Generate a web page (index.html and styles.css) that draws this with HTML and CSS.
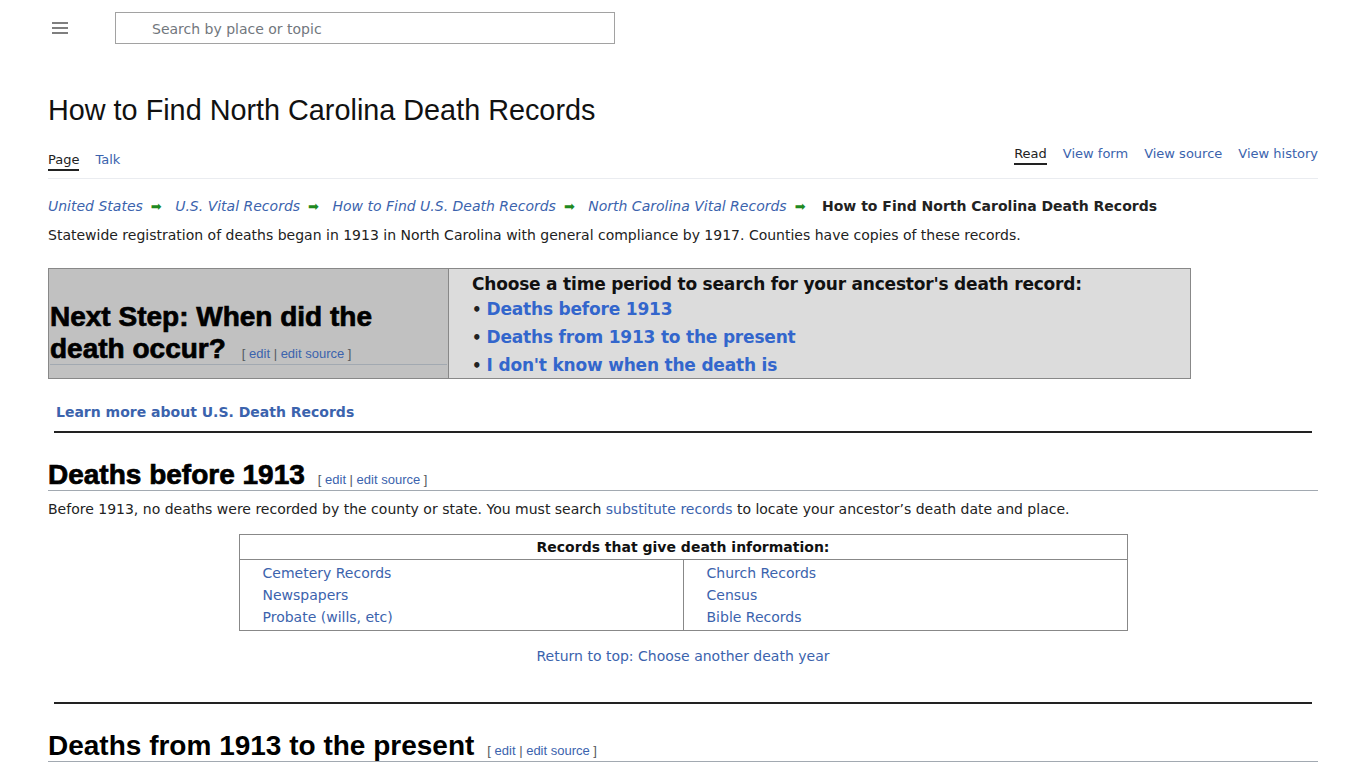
FILE: index.html
```html
<!DOCTYPE html>
<html lang="en">
<head>
<meta charset="UTF-8">
<meta name="viewport" content="width=device-width, initial-scale=1.0">
<title>How to Find North Carolina Death Records</title>
<link rel="stylesheet" href="styles.css">
</head>
<body>

<div class="topbar">
    <button class="menu-btn" aria-label="Menu">
        <svg width="16" height="14" viewBox="0 0 16 14"><path d="M0 2h16M0 7h16M0 12h16" stroke="#555" stroke-width="1.6"/></svg>
    </button>
    <div class="search">
        <input type="text" placeholder="Search by place or topic">
    </div>
</div>

<div class="page">
    <h1 class="title">How to Find North Carolina Death Records</h1>

    <div class="page-tabs">
        <div class="tab-group left">
            <a class="ptab active">Page</a>
            <a class="ptab">Talk</a>
        </div>
        <div class="tab-group right">
            <a class="ptab active">Read</a>
            <a class="ptab">View form</a>
            <a class="ptab">View source</a>
            <a class="ptab">View history</a>
        </div>
    </div>

    <div class="crumbs">
        <a href="#">United States</a><span class="arrow">➡</span>
        <a href="#">U.S. Vital Records</a><span class="arrow">➡</span>
        <a href="#">How to Find U.S. Death Records</a><span class="arrow">➡</span>
        <a href="#">North Carolina Vital Records</a><span class="arrow">➡</span>
        <b>How to Find North Carolina Death Records</b>
    </div>

    <p class="text">Statewide registration of deaths began in 1913 in North Carolina with general compliance by 1917. Counties have copies of these records.</p>

    <div class="step-box" id="top">
        <div class="step-left">
            <h2 class="step-title">Next Step: When did the death occur?<span class="edit">[ <a href="#">edit</a> | <a href="#">edit source</a> ]</span></h2>
        </div>
        <div class="step-right">
            <div class="step-head">Choose a time period to search for your ancestor's death record:</div>
            <ul class="step-list">
                <li><a href="#before">Deaths before 1913</a></li>
                <li><a href="#after">Deaths from 1913 to the present</a></li>
                <li><a href="#">I don't know when the death is</a></li>
            </ul>
        </div>
    </div>

    <a class="learn" href="#">Learn more about U.S. Death Records</a>
    <hr class="rule">

    <h2 class="section heavy" id="before">Deaths before 1913<span class="edit">[ <a href="#">edit</a> | <a href="#">edit source</a> ]</span></h2>
    <p class="text after-head">Before 1913, no deaths were recorded by the county or state. You must search <a href="#">substitute records</a> to locate your ancestor’s death date and place.</p>

    <table class="records">
        <tr><th colspan="2">Records that give death information:</th></tr>
        <tr>
            <td>
                <a href="#">Cemetery Records</a><br>
                <a href="#">Newspapers</a><br>
                <a href="#">Probate (wills, etc)</a>
            </td>
            <td>
                <a href="#">Church Records</a><br>
                <a href="#">Census</a><br>
                <a href="#">Bible Records</a>
            </td>
        </tr>
    </table>

    <div class="back"><a href="#top">Return to top: Choose another death year</a></div>
    <hr class="rule rule-low">

    <h2 class="section" id="after">Deaths from 1913 to the present<span class="edit">[ <a href="#">edit</a> | <a href="#">edit source</a> ]</span></h2>
</div>

</body>
</html>
```

FILE: styles.css
```css
body {
    margin: 0;
    font-family: "DejaVu Sans", Verdana, sans-serif;
    font-size: 13px;
    color: #222;
    background: #fff;
}
a {
    color: #3b63ad;
    text-decoration: none;
}
.topbar {
    display: flex;
    align-items: center;
    height: 56px;
    padding-left: 52px;
}
.menu-btn {
    background: none;
    border: none;
    padding: 0;
    width: 16px;
    height: 14px;
    cursor: pointer;
}
.search {
    margin-left: 47px;
}
.search input {
    display: block;
    width: 500px;
    height: 32px;
    box-sizing: border-box;
    border: 1px solid #a2a2a2;
    padding: 2px 0 0 36px;
    font-family: "DejaVu Sans", sans-serif;
    font-size: 14px;
    color: #222;
}
.search input::placeholder {
    color: #72777d;
}
.page {
    padding: 0 48px;
}
.title {
    font-family: "Liberation Sans", Arial, sans-serif;
    font-weight: normal;
    font-size: 28.8px;
    color: #111;
    margin: 37px 0 0;
    line-height: 34px;
}
/* page / talk on the left, read / view actions on the right */
.page-tabs {
    display: flex;
    justify-content: space-between;
    align-items: flex-start;
    border-bottom: 1px solid #eaecf0;
    height: 51px;
}
.tab-group {
    display: flex;
    gap: 16px;
}
.tab-group.left {
    padding-top: 25px;
}
.tab-group.right {
    padding-top: 19px;
}
.ptab {
    color: #3b63ad;
    font-size: 13px;
    line-height: 16px;
    padding-bottom: 1px;
    border-bottom: 2px solid transparent;
}
.ptab.active {
    color: #222;
    border-bottom-color: #222;
}
.crumbs {
    margin-top: 17px;
    font-size: 14px;
    line-height: 20px;
}
.crumbs a {
    font-style: italic;
}
.crumbs .arrow {
    color: #1f8a1f;
    font-size: 13px;
    line-height: 14px;
    margin: 0 9px 0 8px;
}
.crumbs b {
    color: #222;
    margin-left: 3px;
}
.text {
    font-size: 14px;
    line-height: 20px;
    margin: 9px 0 0;
}
.text.after-head {
    margin-top: 8px;
}
.step-box {
    display: flex;
    width: 1143px;
    height: 111px;
    box-sizing: border-box;
    border: 1px solid #888;
    margin-top: 23px;
}
.step-left {
    width: 400px;
    flex-shrink: 0;
    background: #c1c1c1;
    border-right: 1px solid #888;
    display: flex;
    align-items: flex-end;
    padding-bottom: 13px;
    box-sizing: border-box;
}
/* two lines of 32px; the box is kept a little shorter so the rule sits close under the text */
.step-title {
    font-family: "Liberation Sans", Arial, sans-serif;
    font-weight: bold;
    font-size: 28px;
    line-height: 32px;
    height: 63px;
    color: #000;
    margin: 0 0 0 1px;
    border-bottom: 1px solid #a2a9b1;
    width: 397px;
    -webkit-text-stroke: 0.7px #000;
}
.step-title .edit {
    margin-left: 16px;
}
.edit {
    font-family: "Liberation Sans", Arial, sans-serif;
    font-weight: normal;
    font-size: 13px;
    color: #54595d;
    margin-left: 13px;
    -webkit-text-stroke: 0;
}
.edit a {
    color: #3b63ad;
}
.step-right {
    flex: 1;
    background: #dcdcdc;
    padding: 4px 23px;
}
.step-head {
    font-weight: bold;
    font-size: 17px;
    line-height: 22px;
    color: #111;
    letter-spacing: -0.2px;
}
.step-list {
    list-style: none;
    margin: 1px 0 0;
    padding: 0;
}
.step-list li {
    font-size: 17px;
    line-height: 27px;
    font-weight: bold;
}
.step-list li::before {
    content: "•";
    color: #222;
    font-size: 15px;
    margin-right: 5px;
}
.step-list a {
    color: #3366cc;
    letter-spacing: -0.2px;
}
.learn {
    display: inline-block;
    margin: 25px 0 0 8px;
    font-weight: bold;
    font-size: 14px;
    color: #3b63ad;
}
.rule {
    border: none;
    border-top: 2px solid #222;
    margin: 11px 6px 0 6px;
}
.section {
    font-family: "Liberation Sans", Arial, sans-serif;
    font-weight: bold;
    font-size: 28px;
    color: #000;
    margin: 32px 0 0;
    line-height: 20px;
    border-bottom: 1px solid #a2a9b1;
}
.section.heavy {
    -webkit-text-stroke: 0.7px #000;
}
.records {
    margin: 15px auto 0;
    width: 889px;
    border-collapse: collapse;
    border: 1px solid #888;
    font-size: 14px;
}
.records th {
    border-bottom: 1px solid #888;
    padding: 4px 0 3px;
    line-height: 17px;
    font-size: 14px;
    color: #111;
}
.records td {
    width: 50%;
    padding: 2px 23px 2px;
    line-height: 22px;
    vertical-align: top;
}
.records td + td {
    border-left: 1px solid #888;
}
.back {
    text-align: center;
    margin-top: 17px;
    font-size: 14px;
}
.rule-low {
    margin-top: 38px;
}
```
